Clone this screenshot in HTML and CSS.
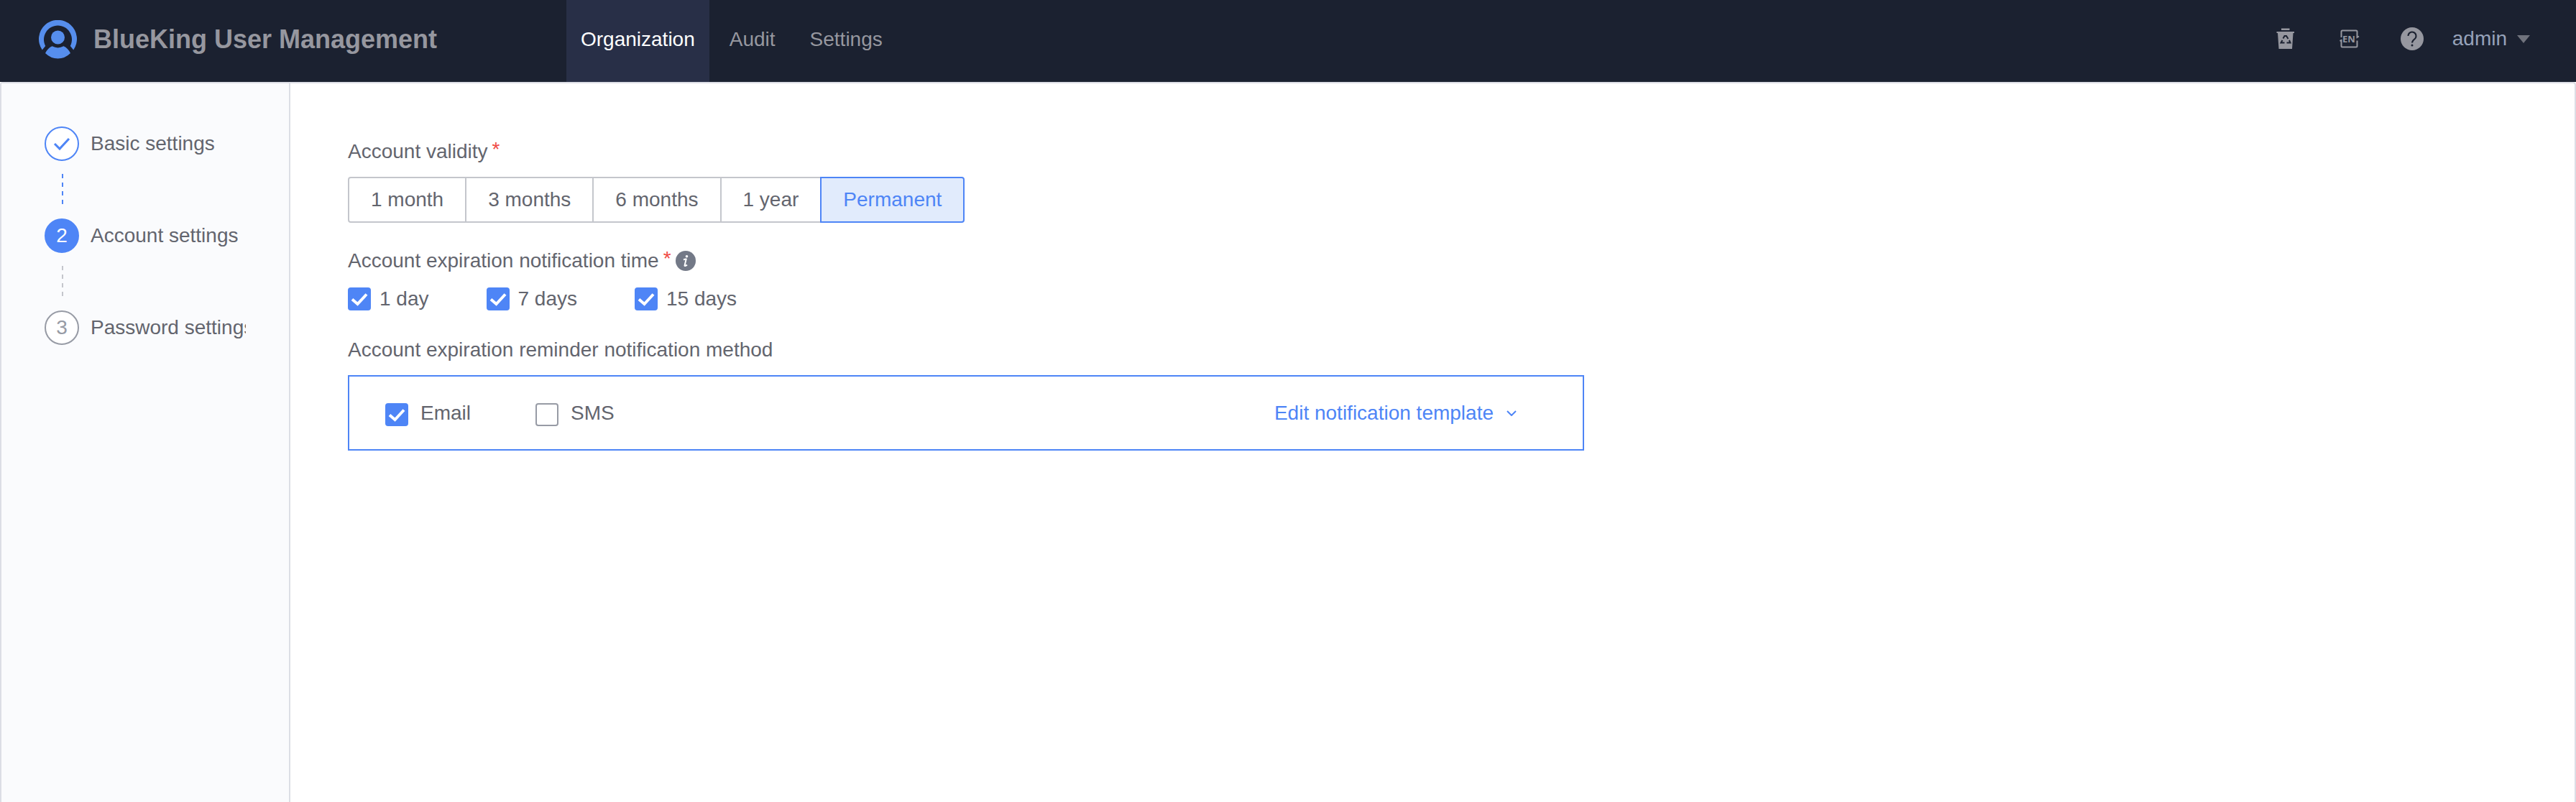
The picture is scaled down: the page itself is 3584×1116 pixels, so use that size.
FILE: index.html
```html
<!DOCTYPE html>
<html lang="en">
<head>
<meta charset="utf-8">
<meta name="viewport" content="width=device-width, initial-scale=1">
<title>BlueKing User Management</title>
<link rel="stylesheet" href="styles.css">
</head>
<body>
<header class="header">
  <div class="brand">
    <svg class="brand-logo" viewBox="0 0 54 54" aria-hidden="true">
      <path d="M4.800 41.500A26.500 26.500 0 1 1 48.200 41.500L43.800 36A19.500 19.500 0 1 0 9.200 36Z"/>
      <circle cx="26.500" cy="24" r="9.500"/>
      <path d="M18.500 36.300Q26.500 40.500 34.500 36.300Q40.500 39 44 46Q36.500 53.500 26.500 53.500T9 46Q12.500 39 18.500 36.300Z"/>
    </svg>
    <h1 class="brand-title">BlueKing User Management</h1>
  </div>
  <nav class="nav">
    <a class="nav-link is-active" href="#organization">Organization</a>
    <a class="nav-link" href="#audit">Audit</a>
    <a class="nav-link" href="#settings">Settings</a>
  </nav>
  <div class="tools">
    <button class="tool" type="button" aria-label="Recycle bin">
      <svg viewBox="0 0 32 32" aria-hidden="true">
        <path fill="currentColor" d="M10 1.500h11.500v2.500H10zM3.500 6h24.500v2h-1.500L25 30H6.500L5 8H3.500z"/>
        <path class="cutout" d="M12.500 15.500l2-3.500h2.500l2.500 4M21 18l1.500 3.500h-5M14.500 21.500H9.500l2-3.500"/>
      </svg>
    </button>
    <button class="tool" type="button" aria-label="Language">
      <svg viewBox="0 0 32 32" aria-hidden="true">
        <path class="line" d="M5.500 14V6q0-1.500 1.500-1.500h19q1.500 0 1.500 1.500v8l2.500-1.500M27.500 18.500V26q0 1.500-1.500 1.500H7q-1.500 0-1.500-1.500v-8L3.500 19"/>
        <text class="lang" x="16" y="21">EN</text>
      </svg>
    </button>
    <button class="tool" type="button" aria-label="Help">
      <svg viewBox="0 0 32 32" aria-hidden="true">
        <circle cx="16" cy="16" r="16" fill="currentColor"/>
        <path class="cutout" d="M10.500 12a5.500 5.500 0 1 1 9 4.200Q16 19 16 21.500"/>
        <circle class="cutout-dot" cx="16" cy="25" r="1.500"/>
      </svg>
    </button>
    <button class="user" type="button">admin
      <svg class="caret" viewBox="0 0 18 11" aria-hidden="true"><path d="M0 0h18L9 11z"/></svg>
    </button>
  </div>
</header>
<div class="page">
  <aside class="sidebar">
    <ol class="steps">
      <li class="step is-done">
        <span class="step-mark"><svg class="step-check" viewBox="0 0 24 24" aria-hidden="true"><path d="M2 12l7 7L22 5"/></svg></span>
        <span class="step-name">Basic settings</span>
      </li>
      <li class="step is-current">
        <span class="step-mark">2</span>
        <span class="step-name">Account settings</span>
      </li>
      <li class="step">
        <span class="step-mark">3</span>
        <span class="step-name">Password settings</span>
      </li>
    </ol>
  </aside>
  <main class="main">
    <form class="form">
      <fieldset class="field">
        <legend class="label">Account validity<span class="required">*</span></legend>
        <div class="segments">
          <label class="segment"><input type="radio" name="validity">1 month</label>
          <label class="segment"><input type="radio" name="validity">3 months</label>
          <label class="segment"><input type="radio" name="validity">6 months</label>
          <label class="segment"><input type="radio" name="validity">1 year</label>
          <label class="segment"><input type="radio" name="validity" checked>Permanent</label>
        </div>
      </fieldset>
      <fieldset class="field">
        <legend class="label">Account expiration notification time<span class="required">*</span>
          <svg class="info" viewBox="0 0 28 28" aria-hidden="true">
            <circle cx="14" cy="14" r="14"/>
            <circle class="info-glyph" cx="15.500" cy="7.800" r="1.800"/>
            <path class="info-line" d="M11 12.500q3-1.500 3.700-1l-2.200 9q0 1.500 3.500-.8"/>
          </svg>
        </legend>
        <div class="checks">
          <label class="check"><input type="checkbox" checked>1 day</label>
          <label class="check"><input type="checkbox" checked>7 days</label>
          <label class="check"><input type="checkbox" checked>15 days</label>
        </div>
      </fieldset>
      <fieldset class="field">
        <legend class="label">Account expiration reminder notification method</legend>
        <div class="methods">
          <label class="check method"><input type="checkbox" checked>Email</label>
          <label class="check method"><input type="checkbox">SMS</label>
          <button class="template" type="button">Edit notification template
            <svg class="chevron" viewBox="0 0 14 8" aria-hidden="true"><path d="M1 1l6 6 6-6"/></svg>
          </button>
        </div>
      </fieldset>
    </form>
  </main>
</div>
</body>
</html>
```

FILE: styles.css
```css
* {
  box-sizing: border-box;
}

body {
  display: flex;
  flex-direction: column;
  min-height: 100vh;
  margin: 0;
  background: #fff;
  color: #63656e;
  font: 28px/36px "Liberation Sans", Arial, sans-serif;
}

button {
  padding: 0;
  border: 0;
  background: none;
  color: inherit;
  font: inherit;
  cursor: pointer;
}

svg {
  display: block;
}

/* Header */
.header {
  display: flex;
  height: 114px;
  background: #1b2130;
  color: #96979f;
}

.brand {
  display: flex;
  flex: 0 0 788px;
  align-items: center;
  gap: 22px;
  padding: 0 0 4px 54px;
}

.brand-logo {
  width: 54px;
  height: 54px;
  fill: #568eed;
}

.brand-title {
  margin: 0;
  font-size: 36px;
  line-height: 40px;
  white-space: nowrap;
}

.nav {
  display: flex;
  gap: 8px;
}

.nav-link {
  display: flex;
  align-items: center;
  padding: 0 20px 4px;
  color: inherit;
  text-decoration: none;
}

.nav-link.is-active {
  background: #282f47;
  color: #fff;
}

.tools {
  display: flex;
  align-items: center;
  gap: 56px;
  margin-left: auto;
  padding: 0 64px 6px 0;
}

.tool {
  width: 32px;
  height: 32px;
}

.cutout {
  fill: none;
  stroke: #1b2130;
  stroke-width: 2;
}

.cutout-dot {
  fill: #1b2130;
}

.line {
  fill: none;
  stroke: currentColor;
  stroke-width: 2;
}

.lang {
  fill: currentColor;
  font: bold 13px "Open Sans", sans-serif;
  text-anchor: middle;
}

.user {
  display: flex;
  align-items: center;
  gap: 14px;
  margin-left: -16px;
  color: #96a2b9;
}

.caret {
  width: 18px;
  height: 11px;
  fill: #70737d;
}

/* Page */
.page {
  display: flex;
  flex: 1;
  border: 2px solid #dcdee5;
  border-bottom: 0;
  border-radius: 4px 4px 0 0;
}

.sidebar {
  flex: 0 0 402px;
  min-width: 0;
  padding: 60px;
  border-right: 2px solid #dcdee5;
  background: #fafbfd;
}

.steps {
  display: grid;
  grid-template-columns: minmax(0, 1fr);
  gap: 80px;
  margin: 0;
  padding: 0;
  list-style: none;
}

.step {
  position: relative;
  display: flex;
  align-items: center;
  gap: 16px;
}

.step:not(:last-child)::after {
  position: absolute;
  top: 66px;
  left: 24px;
  width: 2px;
  height: 42px;
  background: repeating-linear-gradient(#c4c6cc 0 6px, transparent 6px 12px);
  content: "";
}

.step.is-done::after {
  background: repeating-linear-gradient(#4e85f6 0 6px, transparent 6px 12px);
}

.step-mark {
  display: flex;
  flex: none;
  align-items: center;
  justify-content: center;
  width: 48px;
  height: 48px;
  border: 2px solid #979ba5;
  border-radius: 50%;
  background: #fff;
  color: #979ba5;
}

.is-done .step-mark {
  border-color: #4e85f6;
}

.is-current .step-mark {
  border-color: #4e85f6;
  background: #4e85f6;
  color: #fff;
}

.step-check {
  width: 24px;
  height: 24px;
  fill: none;
  stroke: #4e85f6;
  stroke-width: 3;
}

.step-name {
  overflow: hidden;
  white-space: nowrap;
}

/* Form */
.main {
  flex: 1;
  min-width: 0;
  padding: 76px 80px;
}

.form {
  display: grid;
  gap: 34px;
}

.field {
  min-width: 0;
  margin: 0;
  padding: 0;
  border: 0;
}

.label {
  display: flex;
  align-items: center;
  margin-bottom: 16px;
  padding: 0;
  line-height: 38px;
}

.required {
  align-self: flex-start;
  margin: 0 6px;
  color: #f04b45;
  line-height: 32px;
}

.info {
  width: 28px;
  height: 28px;
  fill: #737987;
}

.info-glyph {
  fill: #fff;
}

.info-line {
  fill: none;
  stroke: #fff;
  stroke-width: 2;
}

.segments {
  display: flex;
}

.segment {
  display: flex;
  align-items: center;
  height: 64px;
  padding: 0 30px;
  border: 2px solid #c4c6cc;
  cursor: pointer;
}

.segment + .segment {
  margin-left: -2px;
}

.segment:first-child {
  border-radius: 4px 0 0 4px;
}

.segment:last-child {
  border-radius: 0 4px 4px 0;
}

.segment:has(:checked) {
  z-index: 1;
  border-color: #4e85f6;
  background: #e1ebfc;
  color: #4e85f6;
}

.segment input {
  position: absolute;
  opacity: 0;
}

.checks {
  display: flex;
  gap: 80px;
}

.check {
  display: flex;
  align-items: center;
  gap: 12px;
  cursor: pointer;
}

.check input {
  width: 32px;
  height: 32px;
  margin: 0;
  border: 2px solid #979ba5;
  border-radius: 4px;
  background: #fff;
  appearance: none;
}

.check input:checked {
  border: 0;
  background: #4e85f6 url("data:image/svg+xml,%3Csvg xmlns='http://www.w3.org/2000/svg' viewBox='0 0 32 32'%3E%3Cpath d='M6 16.500l7.500 6.500L26 9.500' fill='none' stroke='%23fff' stroke-width='4'/%3E%3C/svg%3E");
}

.methods {
  display: flex;
  align-items: center;
  gap: 90px;
  max-width: 1720px;
  height: 105px;
  padding: 0 92px 0 50px;
  border: 2px solid #4e85f6;
}

.method {
  align-items: flex-start;
  gap: 17px;
}

.method input {
  margin-top: 4px;
}

.template {
  display: flex;
  align-items: center;
  gap: 18px;
  margin-left: auto;
  color: #4e85f6;
}

.chevron {
  width: 14px;
  height: 8px;
  fill: none;
  stroke: currentColor;
  stroke-width: 2;
}
```
